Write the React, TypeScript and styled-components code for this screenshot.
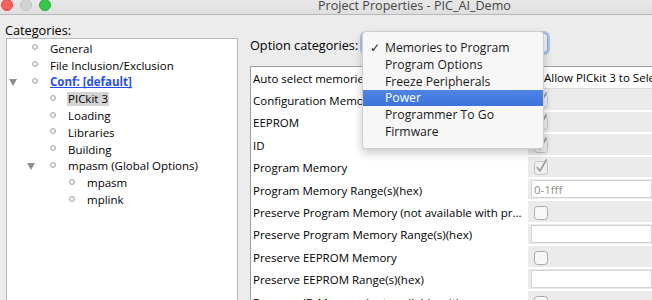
import React from "react";
import styled, { createGlobalStyle } from "styled-components";

const Global = createGlobalStyle`
  html, body { margin: 0; padding: 0; background: #ececec; }
  body {
    width: 652px; height: 300px; overflow: hidden;
    font-family: "Open Sans", "DejaVu Sans", sans-serif;
    color: #000;
  }
  * { box-sizing: border-box; }
`;

const Window = styled.div`
  width: 652px;
  height: 300px;
  overflow: hidden;
  display: flex;
  flex-direction: column;
  background: #ececec;
`;

const TitleBar = styled.div`
  height: 15px;
  flex: none;
  display: flex;
  align-items: flex-start;
  overflow: hidden;
  background: linear-gradient(#e8e8e8, #dedede);
  border-bottom: 1px solid #b8b8b8;
`;

const Lights = styled.div`
  display: flex;
  gap: 7px;
  padding-left: 1px;
  margin-top: -1px;
  flex: none;
`;

const Light = styled.span<{ $c: string; $b: string }>`
  width: 12px;
  height: 12px;
  border-radius: 50%;
  background: ${(p) => p.$c};
  border: 1px solid ${(p) => p.$b};
`;

const Title = styled.span`
  margin-left: 267px;
  margin-top: -1px;
  font-size: 12.6px;
  line-height: 14px;
  color: #444;
  white-space: nowrap;
`;

const Body = styled.div`
  flex: 1;
  min-height: 0;
  display: flex;
`;

const LeftPane = styled.div`
  width: 238px;
  flex: none;
  display: flex;
  flex-direction: column;
  padding-left: 5px;
`;

const PaneLabel = styled.div`
  height: 23px;
  display: flex;
  align-items: flex-end;
  font-size: 12.7px;
  line-height: 15px;
  padding-bottom: 0;
`;

const Tree = styled.div`
  flex: 1;
  margin-left: 1px;
  background: #fff;
  border: 1px solid #b9b9b9;
  border-bottom: none;
  padding-top: 1.5px;
`;

const TreeRow = styled.div<{ $indent: number }>`
  height: 16.8px;
  display: flex;
  align-items: center;
  padding-left: ${(p) => p.$indent}px;
  font-size: 11.5px;
  white-space: nowrap;
`;

const Toggle = styled.span`
  width: 21px;
  flex: none;
  display: flex;
  align-items: center;
  padding-left: 2px;
`;

const Triangle = styled.span`
  width: 0;
  height: 0;
  border-left: 4px solid transparent;
  border-right: 4px solid transparent;
  border-top: 7px solid #8d8d8d;
`;

const BulletBox = styled.span`
  width: 14px;
  flex: none;
  display: flex;
  justify-content: center;
  align-items: center;
  margin-top: -3px;
`;

const Bullet = styled.span`
  width: 6px;
  height: 6px;
  border-radius: 50%;
  border: 1px solid #a9a9a9;
  background: radial-gradient(circle at 40% 40%, #fdfdfd, #d6d6d6);
`;

const NodeText = styled.span<{ $variant?: "link" | "selected" }>`
  margin-left: 7px;
  padding: 0 1px;
  line-height: 14px;
  ${(p) =>
    p.$variant === "link"
      ? "color: #1f4ff2; font-weight: bold; text-decoration: underline;"
      : ""}
  ${(p) => (p.$variant === "selected" ? "background: #d4d4d4;" : "")}
`;

const RightPane = styled.div`
  flex: 1;
  min-width: 0;
  display: flex;
  flex-direction: column;
  padding-left: 12px;
`;

const OptionRow = styled.div`
  margin-top: 18px;
  height: 20px;
  display: flex;
  align-items: center;
  flex: none;
`;

const OptionLabel = styled.span`
  width: 112px;
  flex: none;
  font-size: 12.7px;
  padding-top: 3px;
  white-space: nowrap;
`;

const ComboWrap = styled.div`
  position: relative;
  width: 186px;
  height: 20px;
  flex: none;
`;

const Combo = styled.div`
  width: 100%;
  height: 100%;
  border-radius: 4px;
  background: #f7f7f7;
  border: 1px solid #7fa9e4;
  box-shadow: 0 0 0 2px rgba(128, 174, 236, 0.6);
`;

const Menu = styled.div`
  position: absolute;
  top: -2px;
  left: 0;
  width: 182px;
  padding: 7.5px 0 8.5px;
  background: #f7f7f7;
  border: 1px solid #cfcfcf;
  border-radius: 4px;
  box-shadow: 0 4px 10px rgba(0, 0, 0, 0.22);
  z-index: 2;
`;

const MenuItem = styled.div<{ $active?: boolean }>`
  height: 16.7px;
  display: flex;
  align-items: center;
  padding-left: 7px;
  font-size: 12.2px;
  white-space: nowrap;
  color: ${(p) => (p.$active ? "#fff" : "#1a1a1a")};
  background: ${(p) => (p.$active ? "linear-gradient(#4f86e6, #3b72dc)" : "transparent")};
`;

const Check = styled.span`
  width: 15px;
  flex: none;
  font-family: "DejaVu Sans", sans-serif;
  font-size: 12px;
`;

const Table = styled.div`
  margin-top: 13px;
  flex: 1;
  min-height: 0;
  background: #fff;
  border-top: 1px solid #9f9f9f;
  border-left: 1px solid #9f9f9f;
  overflow: hidden;
`;

const TableRow = styled.div`
  height: 22.4px;
  display: grid;
  grid-template-columns: 277px 1fr;
`;

const LabelCell = styled.div`
  display: flex;
  align-items: center;
  padding-left: 2px;
  font-size: 11.5px;
  white-space: nowrap;
  overflow: hidden;
`;

const ValueCell = styled.div<{ $kind: "combo" | "check" | "field" }>`
  display: flex;
  align-items: center;
  white-space: nowrap;
  overflow: hidden;
  font-size: 11.5px;
  ${(p) =>
    p.$kind === "combo"
      ? "background: #fff; border-bottom: 1px solid #dcdcdc; padding-left: 16px;"
      : "background: #ebebeb; border-bottom: 2px solid #fff;"}
  ${(p) => (p.$kind === "check" ? "padding-left: 6px;" : "")}
  ${(p) => (p.$kind === "field" ? "padding: 1px 0 1px 3px; align-items: stretch;" : "")}
`;

const TextField = styled.div`
  flex: 1;
  display: flex;
  align-items: center;
  background: #fff;
  border: 1px solid #d3d3d3;
  padding-left: 2px;
  color: #8f8f8f;
  font-size: 11.5px;
`;

const CheckBox = ({ checked }: { checked: boolean }) => (
  <svg width="16" height="17" viewBox="0 0 16 17">
    <rect
      x="0.5"
      y="3.5"
      width="13"
      height="13"
      rx="3"
      fill={checked ? "#efefef" : "#f8f8f8"}
      stroke={checked ? "#c3c3c3" : "#a9a9a9"}
    />
    {checked && (
      <path
        d="M3.2 9.5 L6 13 L12.2 2"
        fill="none"
        stroke="#9c9c9c"
        strokeWidth="1.6"
        strokeLinecap="round"
        strokeLinejoin="round"
      />
    )}
  </svg>
);

type Node = { text: string; level: number; open?: boolean; variant?: "link" | "selected" };

const nodes: Node[] = [
  { text: "General", level: 0 },
  { text: "File Inclusion/Exclusion", level: 0 },
  { text: "Conf: [default]", level: 0, open: true, variant: "link" },
  { text: "PICkit 3", level: 1, variant: "selected" },
  { text: "Loading", level: 1 },
  { text: "Libraries", level: 1 },
  { text: "Building", level: 1 },
  { text: "mpasm (Global Options)", level: 1, open: true },
  { text: "mpasm", level: 2 },
  { text: "mplink", level: 2 },
];

const indents = [0, 18, 37];

const menuItems = [
  "Memories to Program",
  "Program Options",
  "Freeze Peripherals",
  "Power",
  "Programmer To Go",
  "Firmware",
];

type Row = { label: string; kind: "combo" | "check" | "field"; checked?: boolean; value?: string };

const rows: Row[] = [
  { label: "Auto select memories and ranges", kind: "combo", value: "Allow PICkit 3 to Select Memories" },
  { label: "Configuration Memory", kind: "check", checked: true },
  { label: "EEPROM", kind: "check", checked: true },
  { label: "ID", kind: "check", checked: true },
  { label: "Program Memory", kind: "check", checked: true },
  { label: "Program Memory Range(s)(hex)", kind: "field", value: "0-1fff" },
  { label: "Preserve Program Memory (not available with pr...", kind: "check", checked: false },
  { label: "Preserve Program Memory Range(s)(hex)", kind: "field", value: "" },
  { label: "Preserve EEPROM Memory", kind: "check", checked: false },
  { label: "Preserve EEPROM Range(s)(hex)", kind: "field", value: "" },
  { label: "Preserve ID Memory (not available with pr...", kind: "check", checked: false },
];

export default function App() {
  return (
    <>
      <Global />
      <Window>
        <TitleBar>
          <Lights>
            <Light $c="#fc605b" $b="#de4a45" />
            <Light $c="#d3d3d3" $b="#c2c2c2" />
            <Light $c="#34c749" $b="#27a83a" />
          </Lights>
          <Title>Project Properties - PIC_AI_Demo</Title>
        </TitleBar>
        <Body>
          <LeftPane>
            <PaneLabel>Categories:</PaneLabel>
            <Tree>
              {nodes.map((n) => (
                <TreeRow key={n.text + n.level} $indent={indents[n.level]}>
                  <Toggle>{n.open && <Triangle />}</Toggle>
                  <BulletBox>
                    <Bullet />
                  </BulletBox>
                  <NodeText $variant={n.variant}>{n.text}</NodeText>
                </TreeRow>
              ))}
            </Tree>
          </LeftPane>
          <RightPane>
            <OptionRow>
              <OptionLabel>Option categories:</OptionLabel>
              <ComboWrap>
                <Combo />
                <Menu>
                  {menuItems.map((m, i) => (
                    <MenuItem key={m} $active={m === "Power"}>
                      <Check>{i === 0 ? "✓" : ""}</Check>
                      {m}
                    </MenuItem>
                  ))}
                </Menu>
              </ComboWrap>
            </OptionRow>
            <Table>
              {rows.map((r) => (
                <TableRow key={r.label}>
                  <LabelCell>{r.label}</LabelCell>
                  <ValueCell $kind={r.kind}>
                    {r.kind === "combo" && r.value}
                    {r.kind === "check" && <CheckBox checked={!!r.checked} />}
                    {r.kind === "field" && <TextField>{r.value}</TextField>}
                  </ValueCell>
                </TableRow>
              ))}
            </Table>
          </RightPane>
        </Body>
      </Window>
    </>
  );
}
